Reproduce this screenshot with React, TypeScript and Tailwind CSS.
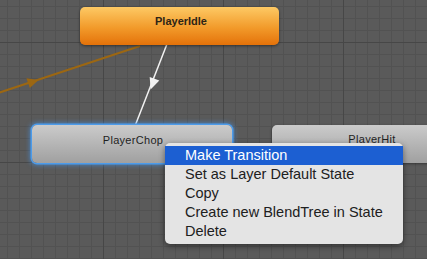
import React from "react";

const menuItems = [
  "Make Transition",
  "Set as Layer Default State",
  "Copy",
  "Create new BlendTree in State",
  "Delete",
];

export default function App() {
  return (
    <div className="relative w-[427px] h-[259px] overflow-hidden bg-[#5a5a5a] bg-[linear-gradient(to_right,#474747_1px,transparent_1px),linear-gradient(to_bottom,#474747_1px,transparent_1px),linear-gradient(to_right,#525252_1px,transparent_1px),linear-gradient(to_bottom,#525252_1px,transparent_1px)] bg-[size:120px_120px,120px_120px,12px_12px,12px_12px] bg-[position:103px_42px,103px_42px,7px_6px,7px_6px]">
      {/* transitions */}
      <svg className="absolute inset-0" width="427" height="259" viewBox="0 0 427 259">
        <line x1="-2" y1="93" x2="140" y2="46" stroke="#9c6712" strokeWidth="2" />
        <polygon points="38.5,80 29.8,88 26.4,78.2" fill="#9c6712" />
        <line x1="167" y1="44" x2="135" y2="126" stroke="#f2f2f2" strokeWidth="1.5" />
        <polygon points="150.6,89.5 159.3,80.6 149.7,77" fill="#f2f2f2" />
      </svg>

      {/* PlayerIdle */}
      <div className="absolute left-[80px] top-[7px] w-[199px] h-[38px] rounded-[5px] bg-[linear-gradient(to_bottom,#fdc964,#f29a2a_55%,#e4720a)] shadow-[0_1px_3px_rgba(0,0,0,0.45)] flex justify-center pt-[8px] pl-[3px]">
        <span className="font-['Liberation_Sans',sans-serif] font-bold text-[11px] leading-[13px] text-[#2d2416]">
          PlayerIdle
        </span>
      </div>

      {/* PlayerChop (selected) */}
      <div className="absolute left-[32px] top-[125px] w-[200px] h-[38px] rounded-[5px] bg-[linear-gradient(to_bottom,#cbcbcb,#b3b3b3_55%,#a0a0a0)] shadow-[0_0_0_1.5px_#4c9bea,0_0_5px_2px_rgba(70,150,235,0.7)] flex justify-center pt-[9px] pl-[2px]">
        <span className="font-['Liberation_Sans',sans-serif] text-[11px] leading-[13px] tracking-[0.3px] text-[#1f1f1f]">
          PlayerChop
        </span>
      </div>

      {/* PlayerHit */}
      <div className="absolute left-[272px] top-[125px] w-[200px] h-[38px] rounded-[5px] bg-[linear-gradient(to_bottom,#cbcbcb,#b3b3b3_55%,#a0a0a0)] shadow-[0_1px_3px_rgba(0,0,0,0.4)] flex justify-center pt-[8px]">
        <span className="font-['Liberation_Sans',sans-serif] text-[11px] leading-[13px] tracking-[0.3px] text-[#1f1f1f]">
          PlayerHit
        </span>
      </div>

      {/* Context menu */}
      <div className="absolute left-[165px] top-[143px] w-[238px] rounded-[5px] bg-[#e4e4e4] py-[3px] shadow-[0_2px_6px_rgba(0,0,0,0.45)] font-['Liberation_Sans',sans-serif] text-[14.5px] leading-[19px] text-[#202020]">
        {menuItems.map((item, i) => (
          <div
            key={item}
            className={
              i === 0
                ? "h-[19px] pl-[20px] bg-[#1c5fd2] text-white"
                : "h-[19px] pl-[20px]"
            }
          >
            {item}
          </div>
        ))}
      </div>
    </div>
  );
}
